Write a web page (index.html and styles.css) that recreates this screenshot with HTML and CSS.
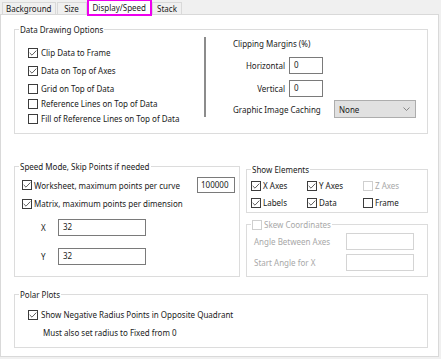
FILE: index.html
```html
<!DOCTYPE html>
<html lang="en">
<head>
    <meta charset="UTF-8">
    <meta name="viewport" content="width=device-width, initial-scale=1.0">
    <title>Display/Speed</title>
    <link rel="stylesheet" href="styles.css">
</head>
<body>
    <div class="tabs">
        <div class="tab">Background</div>
        <div class="tab">Size</div>
        <div class="tab active">Display/Speed</div>
        <div class="tab">Stack</div>
    </div>

    <div class="panel">
        <!-- Data Drawing Options -->
        <div class="group group-data">
            <span class="group-title">Data Drawing Options</span>
            <div class="data-left">
                <label class="row gap3"><span class="cb on"><svg viewBox="0 0 7 7"><polyline points="0.6,3.4 2.6,5.4 6.4,1.4"/></svg></span>Clip Data to Frame</label>
                <label class="row gap3"><span class="cb on"><svg viewBox="0 0 7 7"><polyline points="0.6,3.4 2.6,5.4 6.4,1.4"/></svg></span>Data on Top of Axes</label>
                <label class="row"><span class="cb"></span>Grid on Top of Data</label>
                <label class="row"><span class="cb"></span>Reference Lines on Top of Data</label>
                <label class="row"><span class="cb"></span>Fill of Reference Lines on Top of Data</label>
            </div>
            <div class="vsep"></div>
            <div class="data-right">
                <div class="sub-title">Clipping Margins (%)</div>
                <div class="field-row">
                    <span class="field-label">Horizontal</span>
                    <span class="input w-small">0</span>
                </div>
                <div class="field-row mt6">
                    <span class="field-label">Vertical</span>
                    <span class="input w-small">0</span>
                </div>
                <div class="cache-row">
                    <span class="cache-label">Graphic Image Caching</span>
                    <span class="select">None
                        <svg class="chev" viewBox="0 0 7 4"><polyline points="0.5,0.5 3.5,3.5 6.5,0.5"/></svg>
                    </span>
                </div>
            </div>
        </div>

        <div class="middle">
            <!-- Speed Mode -->
            <div class="group group-speed">
                <span class="group-title">Speed Mode, Skip Points if needed</span>
                <div class="speed-row">
                    <label class="row"><span class="cb on tight"><svg viewBox="0 0 7 7"><polyline points="0.6,3.4 2.6,5.4 6.4,1.4"/></svg></span>Worksheet, maximum points per curve</label>
                    <span class="input w-points">100000</span>
                </div>
                <label class="row matrix-row"><span class="cb on tight"><svg viewBox="0 0 7 7"><polyline points="0.6,3.4 2.6,5.4 6.4,1.4"/></svg></span>Matrix, maximum points per dimension</label>
                <div class="dim-row">
                    <span class="dim-label">X</span>
                    <span class="input w-dim">32</span>
                </div>
                <div class="dim-row mt12">
                    <span class="dim-label">Y</span>
                    <span class="input w-dim">32</span>
                </div>
            </div>

            <div class="side">
                <!-- Show Elements -->
                <div class="group group-show">
                    <span class="group-title">Show Elements</span>
                    <div class="show-grid">
                        <label class="row"><span class="cb on tight"><svg viewBox="0 0 7 7"><polyline points="0.6,3.4 2.6,5.4 6.4,1.4"/></svg></span>X Axes</label>
                        <label class="row"><span class="cb on tight"><svg viewBox="0 0 7 7"><polyline points="0.6,3.4 2.6,5.4 6.4,1.4"/></svg></span>Y Axes</label>
                        <label class="row disabled"><span class="cb tight"></span>Z Axes</label>
                        <label class="row"><span class="cb on tight"><svg viewBox="0 0 7 7"><polyline points="0.6,3.4 2.6,5.4 6.4,1.4"/></svg></span>Labels</label>
                        <label class="row"><span class="cb on tight"><svg viewBox="0 0 7 7"><polyline points="0.6,3.4 2.6,5.4 6.4,1.4"/></svg></span>Data</label>
                        <label class="row"><span class="cb tight"></span>Frame</label>
                    </div>
                </div>

                <!-- Skew Coordinates -->
                <div class="group group-skew">
                    <span class="group-title disabled"><span class="cb tight"></span>Skew Coordinates</span>
                    <div class="skew-row">
                        <span class="skew-label">Angle Between Axes</span>
                        <span class="input w-skew"></span>
                    </div>
                    <div class="skew-row mt4">
                        <span class="skew-label">Start Angle for X</span>
                        <span class="input w-skew"></span>
                    </div>
                </div>
            </div>
        </div>

        <!-- Polar Plots -->
        <div class="group group-polar">
            <span class="group-title">Polar Plots</span>
            <label class="row"><span class="cb on"><svg viewBox="0 0 7 7"><polyline points="0.6,3.4 2.6,5.4 6.4,1.4"/></svg></span>Show Negative Radius Points in Opposite Quadrant</label>
            <div class="polar-note">Must also set radius to Fixed from 0</div>
        </div>
    </div>
</body>
</html>
```

FILE: styles.css
```css
* {
    margin: 0;
    padding: 0;
    box-sizing: border-box;
}

body {
    background: #f0f0f0;
    font-family: "Noto Sans", "Open Sans", sans-serif;
    font-size: 8px;
    line-height: 11px;
    color: #1a1a1a;
    width: 441px;
    height: 359px;
    overflow: hidden;
}

/* 标签页 */
.tabs {
    display: flex;
    align-items: flex-end;
    height: 14px;
    padding-left: 2px;
}
.tab {
    height: 12px;
    min-width: 30px;
    padding: 0 3px;
    border: 1px solid #d9d9d9;
    border-bottom: none;
    margin-right: 1px;
    text-align: center;
    line-height: 11px;
}
.tab.active {
    position: relative;
    z-index: 2;
    height: 15px;
    margin-bottom: -1px;
    padding: 1px 4px 0;
    background: #fff;
    outline: 2px solid #ee00ee;
    outline-offset: -1px;
    border-color: #fff;
}

/* 面板 */
.panel {
    width: 439px;
    height: 343px;
    background: #fff;
    border: 1px solid #d9d9d9;
    padding: 14px 10px 0 13px;
}

.group {
    position: relative;
    border: 1px solid #dcdcdc;
}
.group-title {
    position: absolute;
    top: -6px;
    left: 4px;
    padding: 0 1px;
    background: #fff;
    line-height: 11px;
    white-space: nowrap;
    display: flex;
    align-items: center;
}

.row {
    display: flex;
    align-items: center;
    height: 15px;
    white-space: nowrap;
}
.gap3 {
    margin-bottom: 3px;
}

.cb {
    display: inline-block;
    flex: none;
    width: 10px;
    height: 10px;
    border: 1px solid #3c3c3c;
    background: #fff;
    margin-right: 3px;
}
.cb.tight {
    margin-right: 2px;
}
.cb svg {
    display: block;
    width: 8px;
    height: 8px;
    fill: none;
    stroke: #444;
    stroke-width: 0.75;
}

.disabled {
    color: #a8a8a8;
}
.disabled .cb {
    border-color: #cfcfcf;
}

.input {
    display: inline-block;
    height: 17px;
    border: 1px solid #7a7a7a;
    background: #fff;
    padding: 1px 0 0 4px;
    line-height: 11px;
}
.w-small {
    width: 34px;
}
.w-points {
    width: 38px;
    height: 16px;
    padding-left: 3px;
}
.w-dim {
    width: 88px;
}
.w-skew {
    width: 68px;
    border-color: #d4d4d4;
}

/* Data Drawing Options */
.group-data {
    display: flex;
    height: 105px;
}
.data-left {
    width: 189px;
    padding: 15px 0 0 13px;
}
.vsep {
    width: 2px;
    height: 80px;
    margin-top: 7px;
    background: #8c8c8c;
}
.data-right {
    padding: 8px 0 0 27px;
}
.sub-title {
    margin-bottom: 8px;
}
.field-row {
    display: flex;
    align-items: center;
}
.field-label {
    width: 52px;
    margin-right: 4px;
    text-align: right;
}
.mt6 {
    margin-top: 6px;
}
.cache-row {
    display: flex;
    align-items: center;
    margin-top: 3px;
}
.cache-label {
    width: 101px;
}
.select {
    display: flex;
    align-items: center;
    justify-content: space-between;
    width: 82px;
    height: 18px;
    padding: 0 5px 0 4px;
    background: #e1e1e1;
    border: 1px solid #adadad;
}
.chev {
    width: 7px;
    height: 4px;
    fill: none;
    stroke: #707070;
    stroke-width: 0.8;
}

/* 中间区域 */
.middle {
    display: flex;
    margin-top: 32px;
    height: 111px;
}
.group-speed {
    width: 226px;
    padding: 10px 4px 0 7px;
}
.speed-row {
    display: flex;
    justify-content: space-between;
    align-items: center;
    height: 16px;
}
.matrix-row {
    margin-top: 3px;
}
.dim-row {
    display: flex;
    align-items: center;
    margin-top: 8px;
    padding-left: 19px;
}
.dim-row.mt12 {
    margin-top: 12px;
}
.dim-label {
    width: 17px;
}

.side {
    display: flex;
    flex-direction: column;
    width: 182px;
    margin-left: 6px;
    padding-top: 3px;
}
.group-show {
    height: 44px;
    padding: 8px 0 0 4px;
}
.show-grid {
    display: grid;
    grid-template-columns: 56px 56px 56px;
    row-gap: 2px;
}
.group-skew {
    flex: 1;
    margin-top: 11px;
    padding: 8px 0 0 7px;
}
.skew-row {
    display: flex;
    align-items: center;
}
.skew-label {
    width: 92px;
    color: #a8a8a8;
}
.mt4 {
    margin-top: 4px;
}

/* Polar Plots */
.group-polar {
    margin-top: 17px;
    height: 54px;
    padding: 12px 0 0 13px;
}
.polar-note {
    margin-top: 5px;
    padding-left: 15px;
}
```
